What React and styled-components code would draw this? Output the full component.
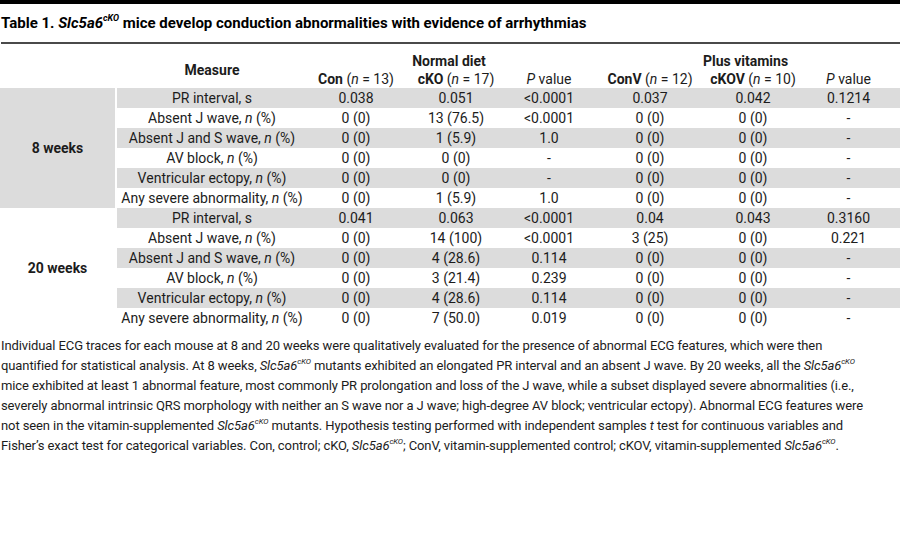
import styled, { createGlobalStyle } from 'styled-components'

const GlobalStyle = createGlobalStyle`
    body {
        margin: 0;
        background: #fff;
        font-family: Roboto, "Liberation Sans", sans-serif;
        color: #1c1c1c;
    }
`

const Page = styled.div`
    width: 900px;
    border-top: 4px solid #000;
`

const Title = styled.h1`
    margin: 9px 0 0 1px;
    font-size: 15px;
    line-height: 20px;
    font-weight: 700;
    color: #000;
    padding-bottom: 9px;
    border-bottom: 2px solid #4a4a4a;
`

const Sup = styled.sup`
    font-size: 0.6em;
    line-height: 0;
    vertical-align: 0.75em;
    font-style: italic;
`

const Table = styled.table`
    width: 900px;
    table-layout: fixed;
    border-collapse: separate;
    border-spacing: 0;
    font-size: 14px;
`

const HeadCell = styled.th`
    font-weight: 400;
    height: ${ ({ $tall }) => $tall ? '26px' : '18px' };
    line-height: 18px;
    padding: ${ ({ $measure }) => $measure ? '8px 0 0' : '0' };
    vertical-align: ${ ({ $measure }) => $measure ? 'middle' : 'bottom' };
    text-align: center;
    white-space: nowrap;

    b { font-weight: 700; }
`

const Row = styled.tr`
    background: ${ ({ $shade }) => $shade ? '#dcdcdc' : '#fff' };
`

const Cell = styled.td`
    height: 20px;
    padding: 0;
    line-height: 20px;
    text-align: center;
    white-space: nowrap;
`

const GroupCell = styled.td`
    padding: 0;
    font-weight: 700;
    text-align: center;
    vertical-align: middle;
    background: ${ ({ $shade }) => $shade ? '#dcdcdc' : '#fff' };
    border-right: 2px solid #fff;
`

const Caption = styled.p`
    margin: 8px 0 0 1px;
    width: 899px;
    font-size: 13px;
    letter-spacing: -0.1px;
    line-height: 20px;
    white-space: nowrap;
`

const Gene = () => <><i>Slc5a6</i><Sup>cKO</Sup></>

const N = () => <i>n</i>

const groups = [
    {
        label: '8 weeks',
        shade: true,
        rows: [
            [<>PR interval, s</>, '0.038', '0.051', '<0.0001', '0.037', '0.042', '0.1214'],
            [<>Absent J wave, <N /> (%)</>, '0 (0)', '13 (76.5)', '<0.0001', '0 (0)', '0 (0)', '-'],
            [<>Absent J and S wave, <N /> (%)</>, '0 (0)', '1 (5.9)', '1.0', '0 (0)', '0 (0)', '-'],
            [<>AV block, <N /> (%)</>, '0 (0)', '0 (0)', '-', '0 (0)', '0 (0)', '-'],
            [<>Ventricular ectopy, <N /> (%)</>, '0 (0)', '0 (0)', '-', '0 (0)', '0 (0)', '-'],
            [<>Any severe abnormality, <N /> (%)</>, '0 (0)', '1 (5.9)', '1.0', '0 (0)', '0 (0)', '-'],
        ],
    },
    {
        label: '20 weeks',
        shade: false,
        rows: [
            [<>PR interval, s</>, '0.041', '0.063', '<0.0001', '0.04', '0.043', '0.3160'],
            [<>Absent J wave, <N /> (%)</>, '0 (0)', '14 (100)', '<0.0001', '3 (25)', '0 (0)', '0.221'],
            [<>Absent J and S wave, <N /> (%)</>, '0 (0)', '4 (28.6)', '0.114', '0 (0)', '0 (0)', '-'],
            [<>AV block, <N /> (%)</>, '0 (0)', '3 (21.4)', '0.239', '0 (0)', '0 (0)', '-'],
            [<>Ventricular ectopy, <N /> (%)</>, '0 (0)', '4 (28.6)', '0.114', '0 (0)', '0 (0)', '-'],
            [<>Any severe abnormality, <N /> (%)</>, '0 (0)', '7 (50.0)', '0.019', '0 (0)', '0 (0)', '-'],
        ],
    },
]

const widths = [117, 190, 98, 102, 84, 118, 88, 103]

const App = () => {
    return (
        <Page>
            <GlobalStyle />
            <Title>Table 1. <Gene /> mice develop conduction abnormalities with evidence of arrhythmias</Title>
            <Table>
                <colgroup>
                    {widths.map((w, i) => <col key={i} style={{ width: w }} />)}
                </colgroup>
                <thead>
                    <tr>
                        <HeadCell rowSpan={2} />
                        <HeadCell rowSpan={2} $measure><b>Measure</b></HeadCell>
                        <HeadCell colSpan={3} $tall><b>Normal diet</b></HeadCell>
                        <HeadCell colSpan={3} $tall><b>Plus vitamins</b></HeadCell>
                    </tr>
                    <tr>
                        <HeadCell><b>Con</b> (<N /> = 13)</HeadCell>
                        <HeadCell><b>cKO</b> (<N /> = 17)</HeadCell>
                        <HeadCell><i>P</i> value</HeadCell>
                        <HeadCell><b>ConV</b> (<N /> = 12)</HeadCell>
                        <HeadCell><b>cKOV</b> (<N /> = 10)</HeadCell>
                        <HeadCell><i>P</i> value</HeadCell>
                    </tr>
                </thead>
                <tbody>
                    {groups.map((g) => g.rows.map((r, i) => (
                        <Row key={g.label + i} $shade={i % 2 === 0}>
                            {i === 0 && <GroupCell rowSpan={g.rows.length} $shade={g.shade}>{g.label}</GroupCell>}
                            {r.map((v, j) => <Cell key={j}>{v}</Cell>)}
                        </Row>
                    )))}
                </tbody>
            </Table>
            <Caption>
                Individual ECG traces for each mouse at 8 and 20 weeks were qualitatively evaluated for the presence of abnormal ECG features, which were then<br />
                quantified for statistical analysis. At 8 weeks, <Gene /> mutants exhibited an elongated PR interval and an absent J wave. By 20 weeks, all the <Gene /><br />
                mice exhibited at least 1 abnormal feature, most commonly PR prolongation and loss of the J wave, while a subset displayed severe abnormalities (i.e.,<br />
                severely abnormal intrinsic QRS morphology with neither an S wave nor a J wave; high-degree AV block; ventricular ectopy). Abnormal ECG features were<br />
                not seen in the vitamin-supplemented <Gene /> mutants. Hypothesis testing performed with independent samples <i>t</i> test for continuous variables and<br />
                Fisher’s exact test for categorical variables. Con, control; cKO, <Gene />; ConV, vitamin-supplemented control; cKOV, vitamin-supplemented <Gene />.
            </Caption>
        </Page>
    )
}

export default App
